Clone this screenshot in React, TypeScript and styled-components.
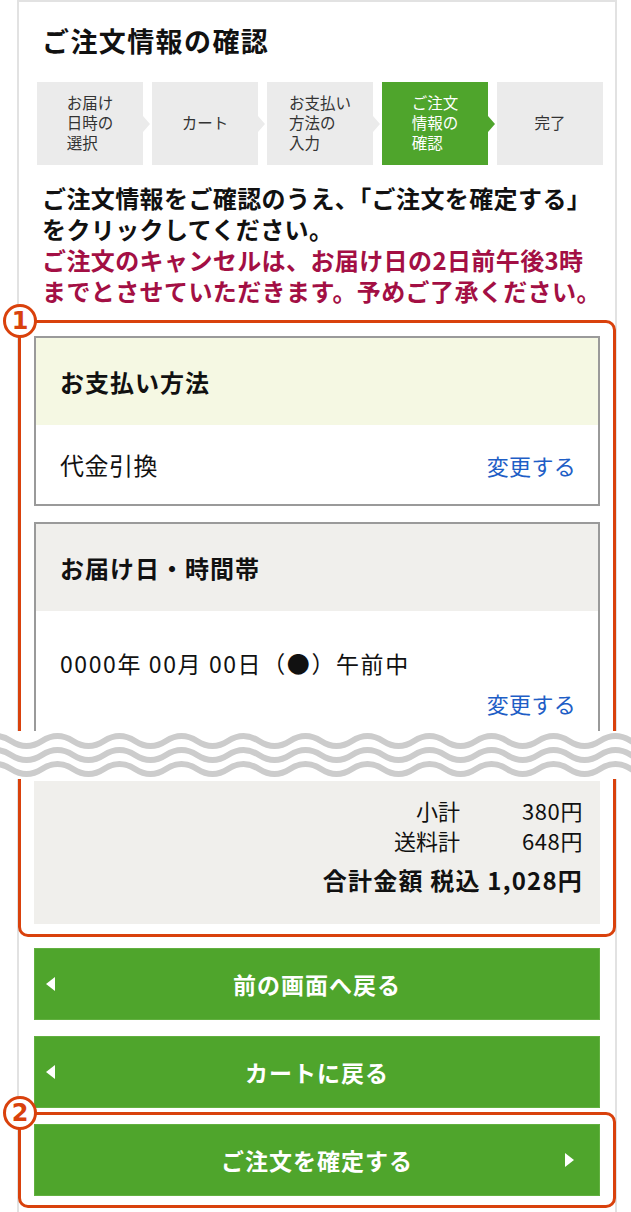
import styled, { createGlobalStyle } from 'styled-components'

const GlobalStyle = createGlobalStyle`
  html, body {
    margin: 0;
    padding: 0;
    background: #fff;
    overflow-x: hidden;
  }
  body {
    font-family: "Noto Sans CJK JP", "Noto Sans", sans-serif;
    color: #111;
  }
  * {
    box-sizing: border-box;
  }
`

const green = '#4fa52c'
const orange = '#d9410c'

const Frame = styled.div`
  margin-left: 17px;
  width: 600px;
  min-height: 1212px;
  border: 2px solid #e2e2e2;
  border-bottom: none;
  padding: 0 15px;
`

const Heading = styled.h1`
  margin: 0;
  padding: 21px 0 0 8px;
  font-size: 27px;
  line-height: 36px;
  font-weight: 700;
  letter-spacing: 1.4px;
`

const Steps = styled.ol`
  list-style: none;
  margin: 23px 0 0 3px;
  padding: 0;
  display: flex;
  gap: 9px;
  width: 566px;
`

const Step = styled.li<{ $active?: boolean }>`
  position: relative;
  flex: 1;
  height: 83px;
  display: flex;
  align-items: center;
  justify-content: center;
  padding-bottom: 3px;
  background: ${({ $active }) => ($active ? green : '#ebebeb')};
  color: ${({ $active }) => ($active ? '#fff' : '#333')};
  font-size: 15.5px;
  line-height: 20px;

  &:not(:last-child)::after {
    content: '';
    position: absolute;
    left: 100%;
    top: 50%;
    margin-top: -8px;
    border-left: 7px solid ${({ $active }) => ($active ? green : '#ebebeb')};
    border-top: 8px solid transparent;
    border-bottom: 8px solid transparent;
  }
`

const StepLabel = styled.span`
  text-align: left;
`

const Intro = styled.div`
  margin-top: 17px;
  padding-left: 8px;
  font-size: 24px;
  line-height: 31px;
  font-weight: 700;
  white-space: nowrap;
  letter-spacing: 0.4px;
`

const Warning = styled.div`
  color: #a30f44;
`

const Highlight = styled.section<{ $top: number }>`
  position: relative;
  margin: ${({ $top }) => $top}px -16px 0;
  border: 3px solid ${orange};
  border-radius: 10px;
  padding: 13px 13px 10px;
`

const HighlightFlat = styled(Highlight)`
  padding: 9px 13px;
`

const Badge = styled.span`
  position: absolute;
  left: -18px;
  top: -19px;
  width: 34px;
  height: 34px;
  border-radius: 50%;
  border: 3px solid ${orange};
  background: #fff;
  color: ${orange};
  font-family: "DejaVu Sans", "Noto Sans", sans-serif;
  font-size: 24px;
  font-weight: 700;
  line-height: 28px;
  text-align: center;
`

const Card = styled.div<{ $open?: boolean }>`
  border: 2px solid #9a9a9a;
  border-bottom: ${({ $open }) => ($open ? 'none' : '2px solid #9a9a9a')};
  background: #fff;
  & + & {
    margin-top: 16px;
  }
`

const CardHead = styled.div<{ $tone: 'lime' | 'grey' }>`
  height: 87px;
  display: flex;
  align-items: center;
  padding-left: 24px;
  background: ${({ $tone }) => ($tone === 'lime' ? '#f5f8e3' : '#f0efec')};
  font-size: 24px;
  font-weight: 700;
  letter-spacing: 1px;
`

const CardRow = styled.div`
  height: 79px;
  display: flex;
  align-items: center;
  justify-content: space-between;
  padding: 0 22px 0 24px;
  font-size: 24px;
  letter-spacing: 0.5px;
`

const CardBody = styled.div`
  padding: 37px 22px 13px 24px;
  font-size: 23px;
  line-height: 30px;
  letter-spacing: 1.6px;
`

const ChangeLink = styled.a`
  color: #1e5ec6;
  font-size: 22px;
  letter-spacing: 0.3px;
  text-decoration: none;
`

const LinkLine = styled.div`
  margin-top: 10px;
  text-align: right;
`

const Wave = styled.svg`
  display: block;
  margin: 0 -34px;
  width: 631px;
  height: 48px;
  background: #fff;
  position: relative;
`

const Summary = styled.div`
  margin-top: 2px;
  background: #f0efec;
  padding: 14px 17px 28px 0;
  display: flex;
  flex-direction: column;
  align-items: flex-end;
`

const SumRow = styled.div`
  display: flex;
  font-size: 22px;
  line-height: 30px;
`

const SumLabel = styled.span`
  text-align: right;
`

const SumValue = styled.span`
  width: 123px;
  text-align: right;
  letter-spacing: 0.6px;
`

const Total = styled.div`
  margin-top: 9px;
  font-size: 24px;
  font-weight: 700;
  line-height: 32px;
  letter-spacing: 1.2px;
`

const Button = styled.button<{ $dir: 'back' | 'next'; $gap: number }>`
  position: relative;
  display: flex;
  align-items: center;
  justify-content: center;
  width: 100%;
  height: 72px;
  margin-top: ${({ $gap }) => $gap}px;
  border: 1px solid #62b040;
  background: ${green};
  color: #fff;
  font-family: inherit;
  font-size: 23px;
  font-weight: 700;
  letter-spacing: 1px;
  cursor: pointer;

  &::before {
    content: '';
    position: absolute;
    top: 50%;
    margin-top: -7px;
    ${({ $dir }) =>
      $dir === 'back'
        ? `left: 11px; border-right: 9px solid #fff;`
        : `right: 25px; border-left: 9px solid #fff;`}
    border-top: 7px solid transparent;
    border-bottom: 7px solid transparent;
  }
`

const wavePath = (y: number) => {
  let d = `M-20 ${y} q15.5 -10 31 0`
  for (let i = 0; i < 22; i++) d += ' t31 0'
  return d
}

function App() {
  const steps = [
    { label: ['お届け', '日時の', '選択'] },
    { label: ['カート'] },
    { label: ['お支払い', '方法の', '入力'] },
    { label: ['ご注文', '情報の', '確認'], active: true },
    { label: ['完了'] },
  ]

  return (
    <>
      <GlobalStyle />
      <Frame>
        <Heading>ご注文情報の確認</Heading>

        <Steps>
          {steps.map((s, i) => (
            <Step key={i} $active={s.active}>
              <StepLabel>
                {s.label.map((l, j) => (
                  <div key={j}>{l}</div>
                ))}
              </StepLabel>
            </Step>
          ))}
        </Steps>

        <Intro>
          ご注文情報をご確認のうえ、「ご注文を確定する」
          <br />
          をクリックしてください。
          <Warning>
            ご注文のキャンセルは、お届け日の2日前午後3時
            <br />
            までとさせていただきます。予めご了承ください。
          </Warning>
        </Intro>

        <Highlight $top={14}>
          <Badge>1</Badge>
          <Card>
            <CardHead $tone="lime">お支払い方法</CardHead>
            <CardRow>
              <span>代金引換</span>
              <ChangeLink href="#">変更する</ChangeLink>
            </CardRow>
          </Card>
          <Card $open>
            <CardHead $tone="grey">お届け日・時間帯</CardHead>
            <CardBody>
              0000年 00月 00日（●）午前中
              <LinkLine>
                <ChangeLink href="#">変更する</ChangeLink>
              </LinkLine>
            </CardBody>
          </Card>
          <Wave viewBox="0 0 631 48">
            {[10, 24, 38].map((y) => (
              <path key={y} d={wavePath(y)} fill="none" stroke="#cccccc" strokeWidth="6" />
            ))}
          </Wave>
          <Summary>
            <SumRow>
              <SumLabel>小計</SumLabel>
              <SumValue>380円</SumValue>
            </SumRow>
            <SumRow>
              <SumLabel>送料計</SumLabel>
              <SumValue>648円</SumValue>
            </SumRow>
            <Total>合計金額 税込 1,028円</Total>
          </Summary>
        </Highlight>

        <Button $dir="back" $gap={11}>前の画面へ戻る</Button>
        <Button $dir="back" $gap={16}>カートに戻る</Button>

        <HighlightFlat $top={4}>
          <Badge>2</Badge>
          <Button $dir="next" $gap={0}>ご注文を確定する</Button>
        </HighlightFlat>
      </Frame>
    </>
  )
}

export default App
